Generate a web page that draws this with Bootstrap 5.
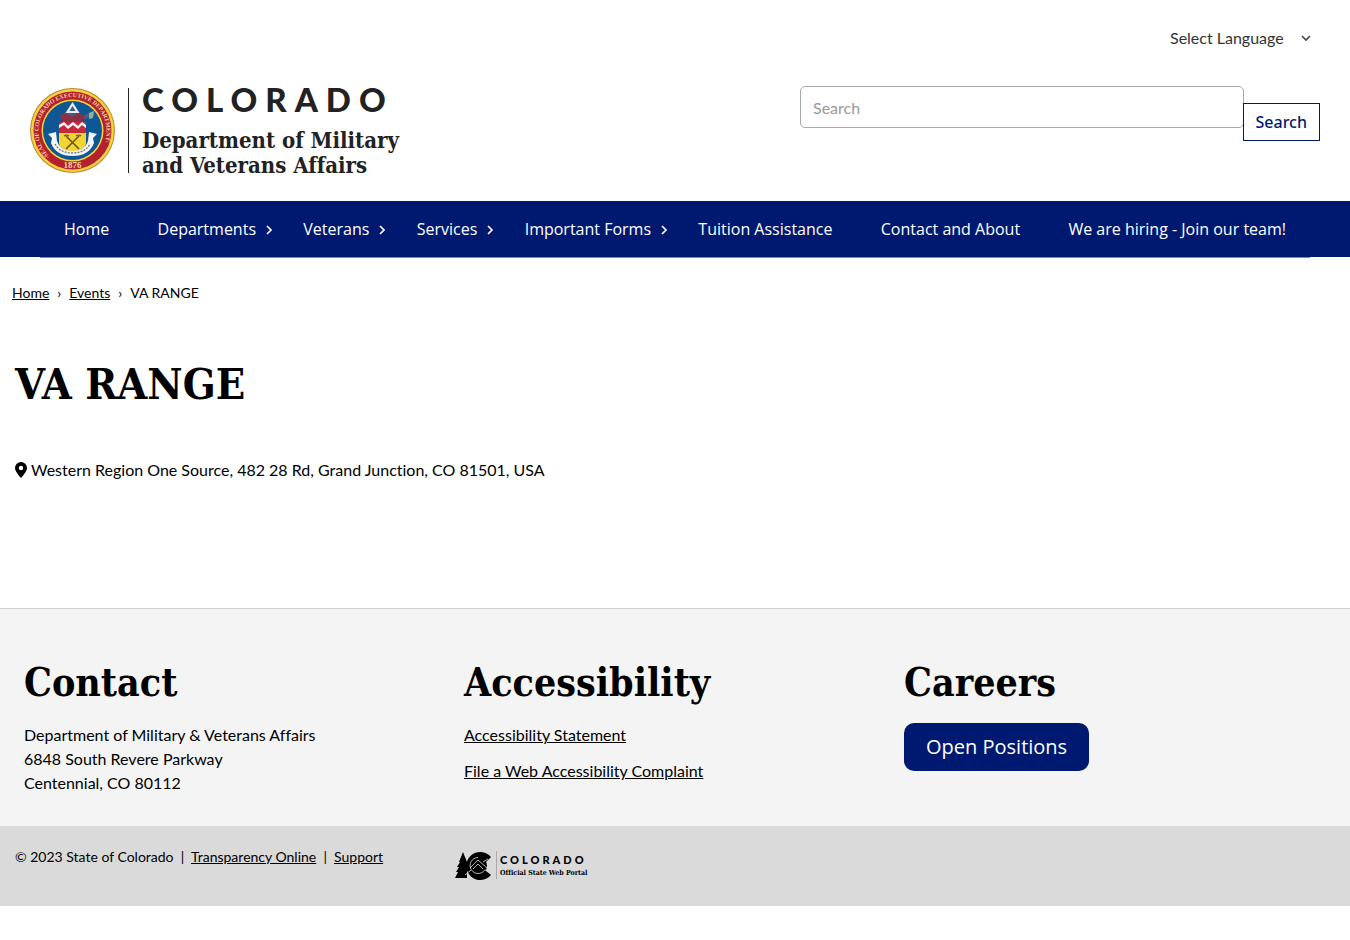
<!DOCTYPE html>
<html lang="en">
<head>
<meta charset="utf-8">
<meta name="viewport" content="width=device-width, initial-scale=1">
<title>VA RANGE | Department of Military and Veterans Affairs</title>
<link href="https://cdn.jsdelivr.net/npm/bootstrap@5.3.0/dist/css/bootstrap.min.css" rel="stylesheet">
<style>
:root { --navy: #001970; --slab: "DejaVu Serif Condensed", "DejaVu Serif", serif; --ui: "Open Sans", sans-serif; }
body { font-family: Lato, sans-serif; font-size: 16px; line-height: 24px; color: #000; background: #fff; font-variant-ligatures: none; }
a { color: #000; }
.wrap { width: 100%; max-width: 1320px; margin: 0 auto; }
.head-wrap { padding: 24px 15px 21px; }
.language { width: 142px; border: 0; padding: 0 20px 0 0; line-height: 28px; font-size: 16px; color: #333;
  background-position: right 0 center; background-size: 12px 12px;
  background-image: url("data:image/svg+xml,%3Csvg xmlns='http://www.w3.org/2000/svg' viewBox='0 0 12 12'%3E%3Cpath d='M2 4l4 4 4-4' fill='none' stroke='%23444' stroke-width='1.6'/%3E%3C/svg%3E"); }
.brand svg { display: block; }
.wordmark { font-family: Lato, sans-serif; font-weight: 900; }
.wordmark-lg { font-size: 33px; letter-spacing: 8px; }
.wordmark-sm { font-size: 11px; letter-spacing: 3px; }
.search-form { flex: 0 1 520px; padding-top: 10px; }
.search-form input { height: 42px; margin-right: -1px; border: 1px solid #aaa; border-radius: 5px; padding: 0 12px; font-size: 16px; }
.search-form input::placeholder { color: #999; }
.search-form button { height: 38px; margin-top: 17px; padding: 0 12px; border: 1px solid var(--navy); border-radius: 0; background: #fff; color: var(--navy); font: 500 16px/24px "Noto Sans", sans-serif; }
.main-nav { background: var(--navy); font-family: var(--ui); }
.main-nav .wrap { padding: 0 25px; }
.main-nav .nav { box-shadow: 0 1px 0 #7f86b5; }
.main-nav .nav-link { position: relative; padding: 16px 24px; font-size: 16px; line-height: 24px; color: #fff; white-space: nowrap; }
.main-nav .has-menu { padding-right: 23px; }
.chev { position: absolute; right: 6px; top: 24px; width: 8px; height: 10px; fill: none; stroke: #fff; stroke-width: 1.7; }
.trail { padding: 24px 12px 0; font-size: 14px; }
.trail .breadcrumb-item + .breadcrumb-item { padding-left: 8px; }
.trail .breadcrumb-item + .breadcrumb-item::before { content: "›"; color: #000; padding-right: 8px; }
.trail .breadcrumb-item.active { color: #000; }
h1, h2 { font-family: var(--slab); font-weight: 700; margin: 0; }
h1 { font-size: 43px; line-height: 50px; }
h2 { font-size: 39px; line-height: 46px; margin-bottom: 18px; }
.event { padding: 54px 0 126px; }
.event address { margin: 49px 0 0; }
.site-foot { background: #f4f4f4; border-top: 1px solid #ccc; padding: 50px 0 31px; }
.site-foot .row { --bs-gutter-x: 18px; margin: 0; }
.open-btn { background: var(--navy); color: #fff; border-radius: 10px; padding: 0 22px; font: 20px/48px var(--ui); }
.legal { background: #dadada; padding: 19px 0 24px; font-size: 14px; }
</style>
</head>
<body>
<header>
  <div class="wrap head-wrap">
    <div class="d-flex justify-content-end pe-2">
      <select class="form-select language" aria-label="Select Language"><option>Select Language</option></select>
    </div>
    <div class="d-flex justify-content-between align-items-start mt-4">
      <a class="brand" href="#" aria-label="Colorado Department of Military and Veterans Affairs">
        <svg width="400" height="104" viewBox="0 -8 400 104">
          <defs>
            <path id="ringTop" d="M20 68.500A34 34 0 1 1 65 68.500"/>
          </defs>
          <g transform="translate(0 4)">
            <circle cx="42.500" cy="42.500" r="42.500" fill="#b8862b"/>
            <circle cx="42.500" cy="42.500" r="41.500" fill="#f6d23c"/>
            <circle cx="42.500" cy="42.500" r="39" fill="#b3202e"/>
            <circle cx="42.500" cy="42.500" r="31" fill="#f6d23c"/>
            <circle cx="42.500" cy="42.500" r="29.500" fill="#0d5795"/>
            <g font-family="Liberation Serif, serif" fill="#f5d9a8" font-weight="700">
              <text font-size="6"><textPath href="#ringTop">·SEAL OF COLORADO EXECUTIVE DEPARTMENT·</textPath></text>
              <text font-size="9" x="42.500" y="79.500" text-anchor="middle">1876</text>
            </g>
            <path d="M30 28l11-7 12 7 9-5 2 5-9 3H31z" fill="#4a5a80"/>
            <path d="M42.500 14l7 11h-14z" fill="#e8ecef"/>
            <path d="M42.500 18l3 5h-6z" fill="#35597e"/>
            <path d="M59 25l5-2-1 7-4 1z" fill="#8bb3a0"/>
            <path d="M30 27l6-2 6 4 6-4 7 3-3 6H33z" fill="#8c2f45"/>
            <path d="M29 34h27v11H29z" fill="#c8283a"/>
            <path d="M29 37l5-3 4 4 5-4 5 4 4-4 4 3v3l-4-3-4 4-5-4-5 4-4-4-5 3z" fill="#fff"/>
            <path d="M29 45h27v10c0 6-9 9-13.500 11C38 64 29 61 29 55z" fill="#f2d433"/>
            <path d="M36 48l13 13M49 48L36 61" stroke="#65511c" stroke-width="1.500" fill="none"/>
            <path d="M34 48q3-2 5 0M46 48q3-2 5 0" stroke="#65511c" stroke-width="1.200" fill="none"/>
            <path d="M18 46l8-2 1 9q3 10 15.500 10T58 53l1-9 8 2-4 4 1 5q-5 13-21.500 13T21 55l1-5z" fill="#f4f4f4"/>
            <path d="M25 56q5 9 17.500 9T60 56" fill="none" stroke="#6c7a84" stroke-width="1.300" stroke-dasharray="2 1.200"/>
          </g>
          <path d="M98.500 4v85" stroke="#222"/>
          <text class="wordmark wordmark-lg" fill="#222" x="112" y="28">COLORADO</text>
          <g fill="#222" font-family="DejaVu Serif Condensed, DejaVu Serif, serif" font-weight="700" font-size="22">
            <text x="112" y="64">Department of Military</text>
            <text x="112" y="89">and Veterans Affairs</text>
          </g>
        </svg>
      </a>
      <form class="search-form d-flex align-items-start" role="search">
        <input class="form-control" type="search" placeholder="Search" aria-label="Search">
        <button class="btn" type="submit">Search</button>
      </form>
    </div>
  </div>
</header>
<nav class="main-nav" aria-label="Main">
  <div class="wrap">
    <ul class="nav justify-content-between flex-xl-nowrap">
      <li class="nav-item"><a class="nav-link" href="#">Home</a></li>
      <li class="nav-item"><a class="nav-link has-menu" href="#">Departments<svg class="chev" viewBox="0 0 8 10"><path d="M2 1l4 4-4 4"/></svg></a></li>
      <li class="nav-item"><a class="nav-link has-menu" href="#">Veterans<svg class="chev" viewBox="0 0 8 10"><path d="M2 1l4 4-4 4"/></svg></a></li>
      <li class="nav-item"><a class="nav-link has-menu" href="#">Services<svg class="chev" viewBox="0 0 8 10"><path d="M2 1l4 4-4 4"/></svg></a></li>
      <li class="nav-item"><a class="nav-link has-menu" href="#">Important Forms<svg class="chev" viewBox="0 0 8 10"><path d="M2 1l4 4-4 4"/></svg></a></li>
      <li class="nav-item"><a class="nav-link" href="#">Tuition Assistance</a></li>
      <li class="nav-item"><a class="nav-link" href="#">Contact and About</a></li>
      <li class="nav-item"><a class="nav-link" href="#">We are hiring - Join our team!</a></li>
    </ul>
  </div>
</nav>
<nav class="trail" aria-label="Breadcrumb">
  <ol class="breadcrumb mb-0">
    <li class="breadcrumb-item"><a href="#">Home</a></li>
    <li class="breadcrumb-item"><a href="#">Events</a></li>
    <li class="breadcrumb-item active" aria-current="page">VA RANGE</li>
  </ol>
</nav>
<main class="wrap event">
  <h1>VA RANGE</h1>
  <address class="d-flex align-items-center gap-1">
    <svg width="12" height="16" viewBox="0 0 12 16" aria-hidden="true"><path fill-rule="evenodd" d="M6 0a6 6 0 0 1 6 6c0 3-3 6.500-6 10C3 12.500 0 9 0 6a6 6 0 0 1 6-6zm0 3.800a2.200 2.200 0 1 0 0 4.400 2.200 2.200 0 0 0 0-4.400z"/></svg>
    <span>Western Region One Source, 482 28 Rd, Grand Junction, CO 81501, USA</span>
  </address>
</main>
<footer>
  <div class="site-foot">
    <div class="wrap">
      <div class="row">
        <section class="col-md-4">
          <h2>Contact</h2>
          <p class="mb-0">Department of Military &amp; Veterans Affairs<br>6848 South Revere Parkway<br>Centennial, CO 80112</p>
        </section>
        <section class="col-md-4">
          <h2>Accessibility</h2>
          <ul class="list-unstyled d-grid mb-0">
            <li class="mb-2 pb-1"><a href="#">Accessibility Statement</a></li>
            <li><a href="#">File a Web Accessibility Complaint</a></li>
          </ul>
        </section>
        <section class="col-md-4">
          <h2>Careers</h2>
          <a class="open-btn d-inline-block text-decoration-none" href="#">Open Positions</a>
        </section>
      </div>
    </div>
  </div>
  <div class="legal">
    <div class="wrap">
      <div class="row g-0">
        <div class="col-md-4">© 2023 State of Colorado &nbsp;|&nbsp; <a href="#">Transparency Online</a> &nbsp;|&nbsp; <a href="#">Support</a></div>
        <div class="col-md-4">
          <a class="d-block pt-1" href="#" aria-label="Colorado Official State Web Portal">
            <svg class="d-block" width="150" height="33" viewBox="0 0 150 33">
              <path d="M0 29l3-6H1l3-5H2l3-5H4l4-10 4 10v16z"/>
              <path d="M36 8A14 14 0 1 0 36 26L31 22h-5V13h5z"/>
              <circle cx="23" cy="17" r="9"/>
              <path d="M15 19l8-8 9 8M18 20l5-5 5 5M10 26l6-5M28 13l5-3M23 8.500a8 8 0 1 0 7 12" fill="none" stroke="#dadada" stroke-width=".8"/>
              <path d="M41.500 2v28" stroke="#aaa"/>
              <text class="wordmark wordmark-sm" x="45" y="15">COLORADO</text>
              <text x="45" y="26" font-family="DejaVu Serif Condensed, DejaVu Serif, serif" font-weight="700" font-size="7">Official State Web Portal</text>
            </svg>
          </a>
        </div>
      </div>
    </div>
  </div>
</footer>
<script src="https://cdn.jsdelivr.net/npm/bootstrap@5.3.0/dist/js/bootstrap.bundle.min.js"></script>
</body>
</html>
